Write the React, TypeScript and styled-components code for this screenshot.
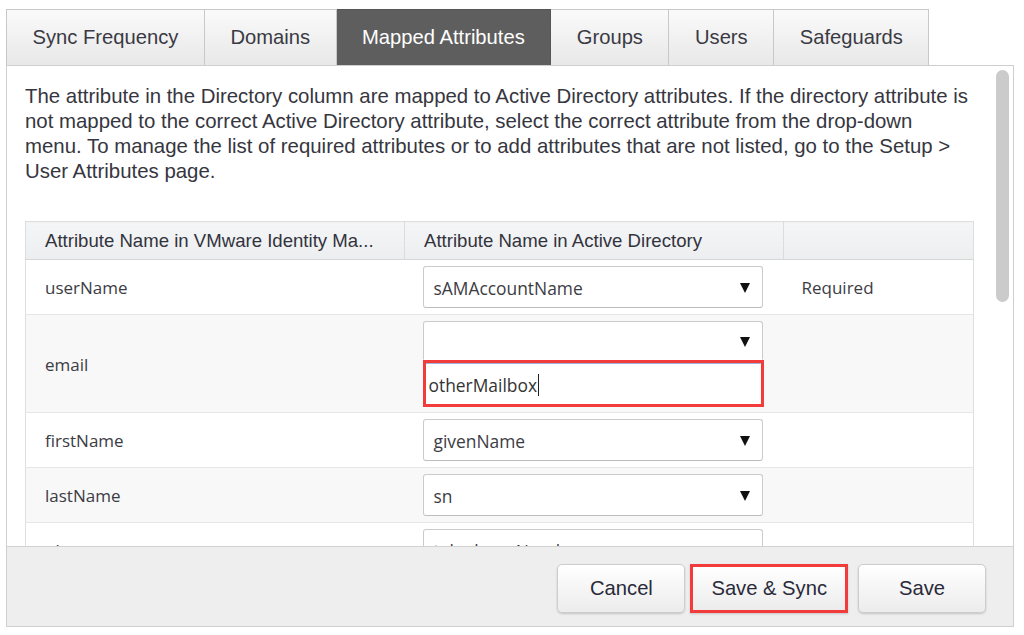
import React from "react";
import styled, { createGlobalStyle } from "styled-components";

const GlobalStyle = createGlobalStyle`
  html, body {
    margin: 0;
    padding: 0;
    background: #fff;
  }
  body {
    font-family: "Liberation Sans", Arial, sans-serif;
    color: #333;
  }
`;

const Page = styled.div`
  width: 1008px;
  padding: 9px 0 0 6px;
`;

const TabBar = styled.div`
  display: flex;
  height: 56px;
`;

const Tab = styled.div<{ $active?: boolean }>`
  display: flex;
  align-items: center;
  justify-content: center;
  padding: 0 25.5px;
  font-size: 20.2px;
  border: 1px solid #c8c8c8;
  border-bottom: none;
  border-left: none;
  &:first-child {
    border-left: 1px solid #c8c8c8;
  }
  background: ${(p) => (p.$active ? "#5e5e5e" : "linear-gradient(#fafafa, #e8e8e8)")};
  color: ${(p) => (p.$active ? "#fff" : "#3a3a44")};
  border-color: ${(p) => (p.$active ? "#555" : "#c8c8c8")};
`;

const Panel = styled.div`
  box-sizing: border-box;
  height: 562px;
  border: 1px solid #cfcfcf;
  display: flex;
  flex-direction: column;
`;

const Body = styled.div`
  flex: 1;
  min-height: 0;
  display: flex;
`;

const Scroller = styled.div`
  flex: 1;
  overflow: hidden;
  padding: 18px 16px 0 18px;
`;

const ScrollTrack = styled.div`
  width: 22px;
  padding-top: 4px;
`;

const ScrollThumb = styled.div`
  width: 13px;
  height: 232px;
  margin-left: 5px;
  border-radius: 7px;
  background: #cbcbcb;
`;

const Intro = styled.p`
  margin: 0 0 37px;
  font-size: 20.4px;
  line-height: 25px;
  white-space: nowrap;
  color: #363640;
`;

const Table = styled.table`
  width: 948px;
  table-layout: fixed;
  border-collapse: collapse;
  border: 1px solid #dedede;
`;

const HeadCell = styled.th<{ $width: number }>`
  box-sizing: border-box;
  width: ${(p) => p.$width}px;
  height: 38px;
  padding: 0 19px;
  text-align: left;
  font-weight: normal;
  font-size: 18.6px;
  color: #33333d;
  white-space: nowrap;
  overflow: hidden;
  background: linear-gradient(#f4f5f6, #eceeef);
  border-left: 1px solid #dcdcdc;
  border-bottom: 1px solid #d6d6d6;
  &:first-child {
    border-left: none;
  }
`;

const Row = styled.tr<{ $shaded?: boolean }>`
  background: ${(p) => (p.$shaded ? "#f8f8f8" : "#fff")};
  border-top: 1px solid #e6e6e6;
`;

const Cell = styled.td<{ $pad?: number; $tight?: boolean }>`
  padding: 6px 18px ${(p) => (p.$tight ? "5px" : "6px")} ${(p) => p.$pad ?? 18}px;
  vertical-align: middle;
  font-family: "Open Sans", "Noto Sans", sans-serif;
  font-size: 17px;
  color: #3c3c44;
`;

const Select = styled.div<{ $open?: boolean }>`
  box-sizing: border-box;
  width: 340px;
  height: ${(p) => (p.$open ? 39 : 42)}px;
  display: flex;
  align-items: center;
  justify-content: space-between;
  padding: 2px 12px 0 10px;
  border: 1px solid #cbcbcb;
  border-bottom-color: ${(p) => (p.$open ? "transparent" : "#bdbdbd")};
  border-radius: ${(p) => (p.$open ? "3px 3px 0 0" : "3px")};
  background: #fff;
  font-family: "Open Sans", "Noto Sans", sans-serif;
  font-size: 17.4px;
  color: #3c3c44;
`;

const SearchBox = styled.div`
  box-sizing: border-box;
  width: 341px;
  height: 47px;
  display: flex;
  align-items: center;
  padding: 2px 0 0 3px;
  border: 3px solid #f23b3b;
  box-shadow: inset 0 1px 0 #9fb4d8;
  background: #fff;
  font-size: 17.4px;
  color: #333;
`;

const Caret = styled.span`
  display: inline-block;
  width: 1px;
  height: 22px;
  margin-left: 1px;
  background: #222;
`;

const Footer = styled.div`
  height: 80px;
  box-sizing: border-box;
  border-top: 1px solid #d2d2d2;
  background: #eeeeee;
  display: flex;
  justify-content: flex-end;
  align-items: flex-start;
  gap: 5px;
  padding: 17px 27px 0 0;
`;

const Button = styled.button<{ $highlight?: boolean }>`
  box-sizing: border-box;
  min-width: 128px;
  height: 49px;
  padding: 0 18px;
  font-family: "Liberation Sans", Arial, sans-serif;
  font-size: 20.2px;
  color: #2a2a3a;
  background: linear-gradient(#ffffff, #ececec);
  border: ${(p) => (p.$highlight ? "3px solid #f23b3b" : "1px solid #cdcdcd")};
  border-radius: ${(p) => (p.$highlight ? "0" : "5px")};
  box-shadow: 0 1px 2px rgba(0, 0, 0, 0.18);
  margin-right: ${(p) => (p.$highlight ? "5px" : "0")};
`;

const Arrow = () => (
  <svg width="10" height="12" viewBox="0 0 10 12">
    <polygon points="0,1 10,1 5,11" fill="#111" />
  </svg>
);

const tabs = ["Sync Frequency", "Domains", "Mapped Attributes", "Groups", "Users", "Safeguards"];

type Mapping = { name: string; value: string; note?: string };

const mappings: Mapping[] = [
  { name: "userName", value: "sAMAccountName", note: "Required" },
  { name: "email", value: "" },
  { name: "firstName", value: "givenName" },
  { name: "lastName", value: "sn" },
  { name: "phone", value: "telephoneNumber" },
];

export default function App() {
  return (
    <>
      <GlobalStyle />
      <Page>
        <TabBar>
          {tabs.map((t) => (
            <Tab key={t} $active={t === "Mapped Attributes"}>
              {t}
            </Tab>
          ))}
        </TabBar>
        <Panel>
          <Body>
            <Scroller>
              <Intro>
                The attribute in the Directory column are mapped to Active Directory attributes. If the directory attribute is
                <br />
                not mapped to the correct Active Directory attribute, select the correct attribute from the drop-down
                <br />
                menu. To manage the list of required attributes or to add attributes that are not listed, go to the Setup &gt;
                <br />
                User Attributes page.
              </Intro>
              <Table>
                <thead>
                  <tr>
                    <HeadCell $width={379}>Attribute Name in VMware Identity Ma...</HeadCell>
                    <HeadCell $width={379}>Attribute Name in Active Directory</HeadCell>
                    <HeadCell $width={190}></HeadCell>
                  </tr>
                </thead>
                <tbody>
                  {mappings.map((m, i) => {
                    const open = m.name === "email";
                    return (
                      <Row key={m.name} $shaded={i % 2 === 1}>
                        <Cell $pad={19} $tight={open}>
                          {m.name}
                        </Cell>
                        <Cell $tight={open}>
                          {open ? (
                            <>
                              <Select $open>
                                <span />
                                <Arrow />
                              </Select>
                              <SearchBox>
                                otherMailbox
                                <Caret />
                              </SearchBox>
                            </>
                          ) : (
                            <Select>
                              <span>{m.value}</span>
                              <Arrow />
                            </Select>
                          )}
                        </Cell>
                        <Cell $tight={open}>{m.note}</Cell>
                      </Row>
                    );
                  })}
                </tbody>
              </Table>
            </Scroller>
            <ScrollTrack>
              <ScrollThumb />
            </ScrollTrack>
          </Body>
          <Footer>
            <Button>Cancel</Button>
            <Button $highlight>Save &amp; Sync</Button>
            <Button>Save</Button>
          </Footer>
        </Panel>
      </Page>
    </>
  );
}
